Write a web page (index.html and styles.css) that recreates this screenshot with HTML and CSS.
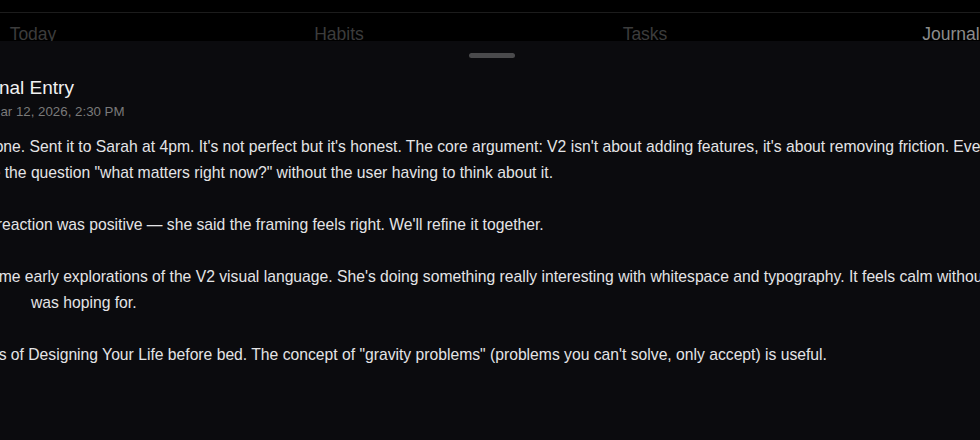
FILE: index.html
```html
<!DOCTYPE html>
<html lang="en">
<head>
<meta charset="utf-8">
<title>Journal Entry</title>
<link rel="stylesheet" href="styles.css">
</head>
<body>
<div class="app">
  <nav class="tabbar">
    <div class="tab">Today</div>
    <div class="tab">Habits</div>
    <div class="tab">Tasks</div>
    <div class="tab active">Journal</div>
  </nav>
  <section class="sheet">
    <div class="handle"></div>
    <div class="content">
      <h1 class="title">Journal Entry</h1>
      <div class="date">Thu, Mar 12, 2026, 2:30 PM</div>
      <div class="entry">
        <p>It's done. Sent it to Sarah at 4pm. It's not perfect but it's honest. The core argument: V2 isn't about adding features, it's about removing friction. Every screen should<br>serve the question "what matters right now?" without the user having to think about it.</p>
        <p>First reaction was positive — she said the framing feels right. We'll refine it together.</p>
        <p>Sent me early explorations of the V2 visual language. She's doing something really interesting with whitespace and typography. It feels calm without being empty, exactly<br><span class="gap">what I</span>was hoping for.</p>
        <p>Pages of Designing Your Life before bed. The concept of "gravity problems" (problems you can't solve, only accept) is useful.</p>
      </div>
    </div>
  </section>
</div>
</body>
</html>
```
FILE: styles.css
```css
html, body {
  margin: 0;
  height: 100%;
  background: #000;
  overflow: hidden;
}

.app {
  position: relative;
  box-sizing: border-box;
  width: 1224px;
  height: 440px;
  margin-left: -120px;
  padding-top: 12px;
  font-family: "Liberation Sans", Arial, sans-serif;
}

.tabbar {
  display: grid;
  grid-template-columns: repeat(4, 1fr);
  border-top: 1px solid #1c1c1c;
  padding-top: 11px;
}

.tab {
  text-align: center;
  font-size: 17.5px;
  line-height: 20px;
  color: #3c3c3c;
}

.tab.active {
  color: #8c8c8c;
}

.sheet {
  position: absolute;
  top: 41px;
  left: 0;
  right: 0;
  bottom: 0;
  background: #0b0b0e;
  padding-top: 12px;
}

.handle {
  width: 46px;
  height: 5px;
  border-radius: 3px;
  background: #4a4a4c;
  margin: 0 auto;
}

.content {
  padding: 18px 0 0 82px;
}

.title {
  margin: 0;
  font-size: 19px;
  line-height: 24px;
  font-weight: 400;
  color: #f2f2f2;
}

.date {
  margin: 3px 0 0 -3px;
  font-size: 13.3px;
  line-height: 18px;
  color: #7a7a7a;
}

.entry {
  margin-top: 13px;
  font-size: 15.7px;
  line-height: 26px;
  color: #e4e4e6;
  white-space: nowrap;
}

.entry p {
  margin: 0 0 26px;
}

.gap {
  display: inline-block;
  width: 69px;
  color: transparent;
}
```
